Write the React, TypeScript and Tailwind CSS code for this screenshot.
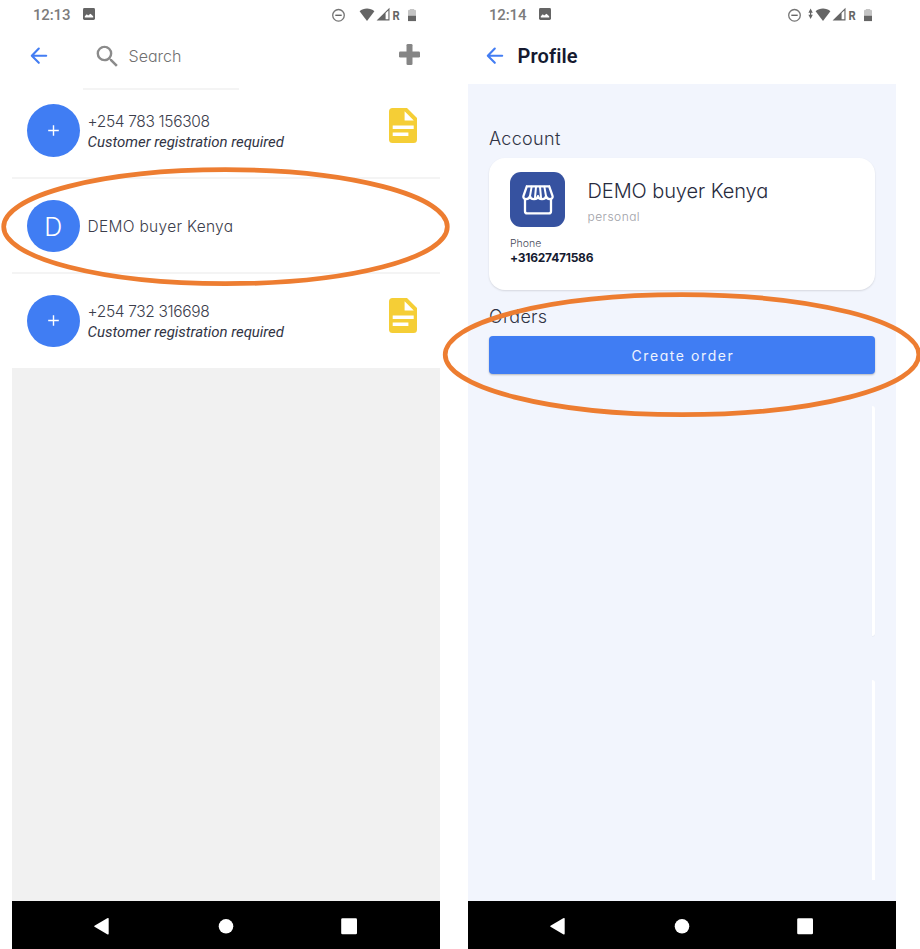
import React from "react";
import { MdSearch } from "react-icons/md";

const geo = "font-['Inter','Liberation_Sans',sans-serif] [font-feature-settings:'cv11'] whitespace-nowrap";
const robo = "font-['Roboto','Liberation_Sans',sans-serif] whitespace-nowrap";

function StatusIcons({ data }: { data?: boolean }) {
  return (
    <svg width="86" height="16" viewBox="0 0 86 16" fill="#656565">
      <circle cx="7.5" cy="8.300" r="5.800" fill="none" stroke="#757575" strokeWidth="1.300" />
      <path d="M4.300 7.600h6.400V9H4.300z" />
      {data && <path d="M23.600 1.500l2.200 4.200h-4.400zM23.600 12l-2.200-4.200h4.400zM23 5h1.200v4H23z" />}
      <path d="M28.600 4.200C32.500.6 39.500.6 43.400 4.200L36 14z" />
      <path d="M45.600 13.500L58.500.8v12.700zM54.600 6v6.300h2.800V3.400z" fillRule="evenodd" />
      <text x="61.400" y="13.200" fontSize="12.500" fontWeight="700" textLength="7.200" lengthAdjust="spacingAndGlyphs" className="font-['Roboto',sans-serif]">R</text>
      <path d="M77 4q0-1.200 1.200-1.200h.8V2h4v.8h.8Q85 2.800 85 4v4.600h-8z" fill="#c4c4c4" />
      <path d="M77 8.600h8v5.500h-8z" />
    </svg>
  );
}

function StatusBar({ time, data }: { time: string; data?: boolean }) {
  return (
    <div className="flex h-[29px] shrink-0 items-center pl-[21px] pr-[23px]">
      <span className={`${robo} w-[50px] text-[15px] font-medium leading-4 tracking-[-0.160px] text-[#7c7c7c]`}>{time}</span>
      <svg className="mb-px" width="12" height="12" viewBox="0 0 12 12">
        <rect width="12" height="12" rx="1.400" fill="#656565" />
        <path d="M1.800 9.500V8.200l2-1.900 1.300 1.200L7.500 5.800l2.700 2.500v1.200z" fill="#fff" />
      </svg>
      <div className="ml-auto"><StatusIcons data={data} /></div>
    </div>
  );
}

function BackArrow() {
  return (
    <svg width="18" height="18" viewBox="0 0 18 18" fill="none" stroke="#437df3" strokeWidth="2.100" strokeLinecap="round" strokeLinejoin="round">
      <path d="M16.200 8.700H2M8.800 1.600L1.800 8.700l7 7.100" />
    </svg>
  );
}

function DocIcon() {
  return (
    <svg width="28" height="35" viewBox="0 0 28 35">
      <path d="M3.500 0H18l10 10v21.500q0 3.500-3.500 3.500h-21Q0 35 0 31.500v-28Q0 0 3.500 0z" fill="#f5ce36" />
      <path d="M15.600 3.200v9.200h9.200zM3.700 17.500h21V21h-21zM3.700 24.600h15.700V28H3.700z" fill="#fff" />
    </svg>
  );
}

function StoreIcon() {
  return (
    <svg width="32" height="30" viewBox="0 0 32 30" fill="none" stroke="#fff" strokeWidth="2.300" strokeLinejoin="round" strokeLinecap="round">
      <path d="M4.800 1.300h22.400M4.800 1.300L1.500 10.800c-.6 2.200.9 3.300 2.600 3.300 2 0 3.500-1 3.900-3 .2 2 1.800 3 4 3s3.800-1 4-3c.2 2 1.800 3 4 3s3.800-1 4-3c.4 2 1.900 3 3.900 3 1.700 0 3.200-1.100 2.600-3.300L27.200 1.300" />
      <path d="M9.600 1.800L8 11.100M14 1.800L13 12.500M18 1.800l1 10.700M22.400 1.800L24 11.100" strokeWidth="2" />
      <path d="M3 14.500v11.700Q3 28.400 5.200 28.400h21.600q2.200 0 2.200-2.200V14.500" />
    </svg>
  );
}

function NavBar() {
  return (
    <div className="h-12 shrink-0 bg-black">
      <svg width="428" height="48" fill="#fff">
        <path d="M82.500 24.700q-.7.500 0 1l12.700 7.500q1.500.7 1.500-.6V17.800q0-1.300-1.500-.6z" />
        <circle cx="214" cy="25.300" r="7.300" />
        <rect x="329.200" y="17.300" width="15.800" height="16" rx="1.300" />
      </svg>
    </div>
  );
}

function Avatar({ letter }: { letter?: string }) {
  return (
    <div className="flex size-[52.500px] shrink-0 items-center justify-center rounded-full bg-[#407df3]">
      {letter ? (
        <span className={`${geo} mt-[2px] text-[25px] font-light leading-[50px] text-white`}>{letter}</span>
      ) : (
        <svg width="11" height="11" viewBox="0 0 11 11" stroke="#fff" strokeWidth="1.400"><path d="M5.500.2v10.600M.2 5.500h10.600" /></svg>
      )}
    </div>
  );
}

function Lead({ phone }: { phone: string }) {
  return (
    <>
      <Avatar />
      <div className="ml-2 mt-[3px] flex flex-col">
        <span className={`${geo} text-[15.500px] font-light leading-[21px] tracking-[-0.340px] text-[#3c3e4c]`}>{phone}</span>
        <span className={`${robo} text-[15px] italic leading-[21px] tracking-[-0.030px] text-[#323545]`}>Customer registration required</span>
      </div>
      <div className="mb-[10px] ml-auto mr-[23px]"><DocIcon /></div>
    </>
  );
}

function Contacts() {
  return (
    <div className="flex h-[949px] w-[428px] flex-col bg-[#f1f1f1]">
      <div className="bg-white">
        <StatusBar time="12:13" />
        <div className="flex h-[61px]">
          <div className="pl-[18px] pt-[18px]"><BackArrow /></div>
          <div className="ml-[35px] flex w-[156px] items-start border-b-2 border-[#f4f4f4] pl-[10px] pt-[13px]">
            <MdSearch size={29} color="#8b8b8b" />
            <span className={`${geo} ml-[6.500px] mt-[2px] text-base font-light leading-6 tracking-[0.020px] text-[#707070]`}>Search</span>
          </div>
          <svg className="ml-auto mr-5 mt-[15px]" width="21" height="21" viewBox="0 0 21 21" fill="#858585">
            <rect y="7.500" width="21" height="6" rx="1.300" /><rect x="7.500" width="6" height="21" rx="1.300" />
          </svg>
        </div>
        <div className="flex h-[89px] items-center border-b-2 border-[#f4f4f4] pb-[6px] pl-[15px]">
          <Lead phone="+254 783 156308" />
        </div>
        <div className="flex h-[94.500px] items-center border-b-2 border-[#f4f4f4] pl-[15px] pt-px">
          <Avatar letter="D" />
          <span className={`${geo} ml-2 mt-[3px] text-[15.500px] font-light leading-5 tracking-[0.300px] text-[#3c3e4c]`}>DEMO buyer Kenya</span>
        </div>
        <div className="flex h-[94.500px] items-center pl-[15px]">
          <Lead phone="+254 732 316698" />
        </div>
      </div>
      <div className="grow" />
      <NavBar />
    </div>
  );
}

function Profile() {
  return (
    <div className="flex h-[949px] w-[428px] flex-col bg-[#f2f5fd]">
      <div className="h-[84px] shrink-0 bg-white">
        <StatusBar time="12:14" data />
        <div className="flex h-[54px] items-center pl-[18px]">
          <BackArrow />
          <span className={`${robo} ml-[13.500px] text-[20px] font-semibold leading-6 tracking-[0.120px] text-[#151a30]`}>Profile</span>
        </div>
      </div>
      <div className="flex grow flex-col px-[21px] pt-[43px]">
        <h2 className={`${geo} h-[31px] text-[18px] font-[350] leading-6 tracking-[0.320px] text-[#303445]`}>Account</h2>
        <div className="h-[132px] w-[386px] rounded-[16px] bg-white pl-[21px] pt-[14px] shadow-[0_1px_2px_rgba(0,0,0,0.12)]">
          <div className="flex">
            <div className="flex size-[55px] items-center justify-center rounded-[11px] bg-[#3652a0]">
              <StoreIcon />
            </div>
            <div className="ml-[22.500px] flex flex-col pt-[5px]">
              <span className={`${geo} text-[20px] font-light leading-7 tracking-[-0.080px] text-[#272b3d]`}>DEMO buyer Kenya</span>
              <span className={`${geo} text-[12px] font-light leading-[23px] tracking-[0.470px] text-[#a0a1a8]`}>personal</span>
            </div>
          </div>
          <div className={`${geo} mt-2 text-[10.500px] font-light leading-[15px] text-[#484b5a]`}>Phone</div>
          <div className={`${geo} text-[12px] font-bold leading-[13px] tracking-[-0.250px] text-[#151a30]`}>+31627471586</div>
        </div>
        <h2 className={`${geo} mt-[15px] h-[31px] text-[18px] font-[350] leading-6 tracking-[0.250px] text-[#303445]`}>Orders</h2>
        <button className={`${geo} h-[38px] w-[386px] shrink-0 rounded-[4px] bg-[#407df3] pl-[2px] text-[14px] font-normal tracking-[1.580px] text-[#eef3ff] shadow-[0_1px_2px_rgba(0,0,0,0.25)]`}>
          Create order
        </button>
        <div className="mt-[32px] h-[230px] w-[3px] self-end rounded-r-[3px] bg-white shadow-[0_1px_1px_rgba(0,0,0,0.04)]" />
        <div className="mt-[44px] h-[200px] w-[3px] self-end rounded-tr-[3px] bg-white" />
      </div>
      <NavBar />
    </div>
  );
}

export default function App() {
  return (
    <main className="relative flex h-[949px] w-[920px] gap-7 overflow-hidden bg-white pl-3">
      <Contacts />
      <Profile />
      <svg className="pointer-events-none absolute inset-0" width="920" height="949" fill="none" stroke="#ed7d31" strokeWidth="4.700">
        <ellipse cx="225.500" cy="226.700" rx="221.800" ry="57" />
        <ellipse cx="682" cy="354.700" rx="236.800" ry="60" />
      </svg>
    </main>
  );
}
